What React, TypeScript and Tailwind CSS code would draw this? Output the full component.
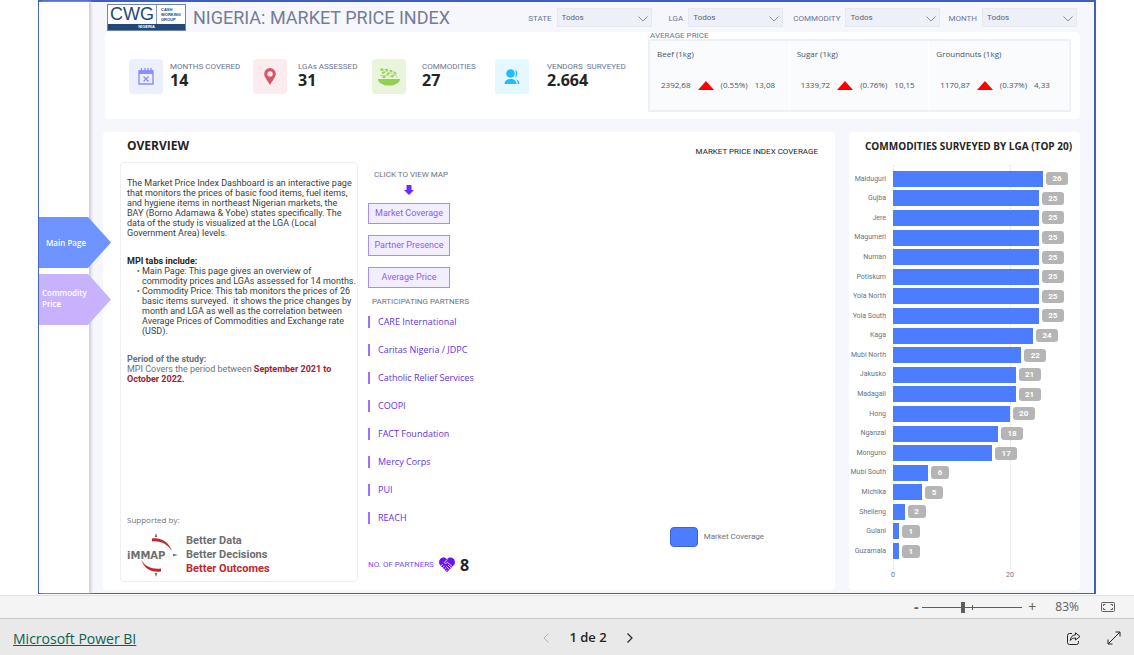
import { useState } from "react";

const DIN = "font-['Roboto','Liberation_Sans',sans-serif]";
const SEGOE = "font-['Open_Sans','Noto_Sans',sans-serif]";

const filters = [
  { id: "state", label: "STATE", space: "" },
  { id: "lga", label: "LGA", space: "ml-[17px]" },
  { id: "commodity", label: "COMMODITY", space: "ml-2.5" },
  { id: "month", label: "MONTH", space: "ml-2" },
];

const stats = [
  { label: "MONTHS COVERED", value: "14", tile: "bg-[#eaf0ff]", gap: "gap-[7px]", icon: <CalendarIcon /> },
  { label: "LGAs ASSESSED", value: "31", tile: "bg-[#fdecee]", gap: "gap-[11px]", icon: <PinIcon /> },
  { label: "COMMODITIES", value: "27", tile: "bg-[#e8f5dc]", gap: "gap-4", icon: <BowlIcon /> },
  { label: "VENDORS  SURVEYED", value: "2.664", tile: "bg-[#e6f8ff]", gap: "gap-[18px]", icon: <PeopleIcon /> },
];

const prices = [
  { name: "Beef (1kg)", value: "2392,68", change: "(0.55%)", diff: "13,08" },
  { name: "Sugar (1kg)", value: "1339,72", change: "(0.76%)", diff: "10,15" },
  { name: "Groundnuts (1kg)", value: "1170,87", change: "(0.37%)", diff: "4,33" },
];

const partners = [
  "CARE International",
  "Caritas Nigeria / JDPC",
  "Catholic Relief Services",
  "COOPI",
  "FACT Foundation",
  "Mercy Corps",
  "PUI",
  "REACH",
];

const lgas = [
  { name: "Maiduguri", count: 26 },
  { name: "Gujba", count: 25 },
  { name: "Jere", count: 25 },
  { name: "Magumeri", count: 25 },
  { name: "Numan", count: 25 },
  { name: "Potiskum", count: 25 },
  { name: "Yola North", count: 25 },
  { name: "Yola South", count: 25 },
  { name: "Kaga", count: 24 },
  { name: "Mubi North", count: 22 },
  { name: "Jakusko", count: 21 },
  { name: "Madagali", count: 21 },
  { name: "Hong", count: 20 },
  { name: "Nganzai", count: 18 },
  { name: "Monguno", count: 17 },
  { name: "Mubi South", count: 6 },
  { name: "Michika", count: 5 },
  { name: "Shelleng", count: 2 },
  { name: "Gulani", count: 1 },
  { name: "Guzamala", count: 1 },
];

// the x axis runs a little past the largest bar so its badge fits
const AXIS_MAX = 30;

function CalendarIcon() {
  return (
    <svg width="16" height="17" viewBox="0 0 16 17" fill="none">
      <path d="M1 3h14v13H1z" stroke="#8c8cff" strokeWidth="1.4" />
      <path d="M1 2.500h14v3.500H1z" fill="#8c8cff" />
      <path d="M3.500 0v4M7 0v3M10 0v3M13 0v4" stroke="#8c8cff" strokeWidth="1.3" />
      <path d="M5.500 8.500l5 5M10.500 8.500l-5 5" stroke="#8c8cff" strokeWidth="1.4" />
    </svg>
  );
}

function PinIcon() {
  return (
    <svg width="12" height="17" viewBox="0 0 12 17">
      <path
        fillRule="evenodd"
        fill="#d9536a"
        d="M6 0a5.8 5.8 0 0 0-5.8 5.8C.2 9.500 4 13 6 17c2-4 5.800-7.500 5.800-11.200A5.800 5.800 0 0 0 6 0zm0 3.200a2.700 2.700 0 1 1 0 5.400 2.700 2.700 0 0 1 0-5.400z"
      />
    </svg>
  );
}

function BowlIcon() {
  return (
    <svg width="22" height="18" viewBox="0 0 22 18">
      <path d="M0 11h22c0 3-2.500 4.500-5 5.500-1 .7-2 .9-3 .9H8c-1 0-2-.2-3-.9C2.500 15.500 0 14 0 11z" fill="#92d050" />
      <path d="M2 2.500c6 .5 13 2.500 18 7M2 7.500c4-.5 9 0 13 2" stroke="#92d050" strokeWidth="0.6" fill="none" />
      <g fill="#92d050">
        <ellipse cx="4" cy="1.500" rx="1.800" ry="0.900" />
        <ellipse cx="8.500" cy="1.800" rx="1.800" ry="1" transform="rotate(15 8.500 1.800)" />
        <ellipse cx="13" cy="3" rx="1.800" ry="1" transform="rotate(25 13 3)" />
        <ellipse cx="17" cy="5" rx="1.800" ry="1" transform="rotate(35 17 5)" />
        <ellipse cx="5.500" cy="4.700" rx="1.800" ry="0.900" transform="rotate(-15 5.500 4.700)" />
        <ellipse cx="10" cy="5.900" rx="1.800" ry="0.900" transform="rotate(-10 10 5.900)" />
        <ellipse cx="14.500" cy="7.900" rx="1.800" ry="0.900" />
        <ellipse cx="6" cy="9" rx="1.800" ry="0.900" />
      </g>
    </svg>
  );
}

function PeopleIcon() {
  return (
    <svg width="16" height="16" viewBox="0 0 16 16" fill="#1fbcff">
      <circle cx="6.500" cy="4.500" r="4.300" />
      <path d="M0.500 15c0-3 2.200-5 6-5s6 2 6 5z" />
      <path d="M11 .8a4 4 0 0 1 0 7.400c1.300-2 1.300-5.400 0-7.400zM12.300 10.200c2 .7 3.200 2.500 3.200 4.800h-1.800c0-2-.4-3.500-1.400-4.800z" />
    </svg>
  );
}

function HeartHandsIcon() {
  return (
    <svg width="16" height="16" viewBox="0 0 16 16">
      <path
        d="M8 2.300C6.200-.2 2.500.200 1 2.300c-1.400 2-1.200 4.500.5 6.300L8 15.200l6.500-6.600c1.700-1.800 1.900-4.300.5-6.300C13.500.200 9.800-.2 8 2.300z"
        fill="#6a11f5"
      />
      <path
        d="M8.300 2.300L5.200 5.500c.8 1.300 2.300 1 3.200-.2l5.400 4.800M9 8l3.300 3.300M7.200 9.300l3.400 3.400M1.800 9l2-2M3.300 11l2.200-2.200M5.200 12.600l1.800-1.800M7 14.200l1.300-1.300"
        stroke="#fff"
        strokeWidth="0.800"
        fill="none"
      />
    </svg>
  );
}

function CwgLogo() {
  return (
    <div className="flex w-[79px] shrink-0 flex-col border border-[#6f86a8] bg-white font-['Liberation_Sans',sans-serif] text-[#24477a]">
      <div className="flex h-[19px]">
        <span className="w-[49px] border-r border-[#8c9bb5] text-center text-[18px] leading-[18px]">CWG</span>
        <span className="flex-1 pt-0.5 pl-1 text-[4px] leading-[5px] font-bold">
          CASH
          <br />
          WORKING
          <br />
          GROUP
        </span>
      </div>
      <div className="h-[6px] bg-[#24477a] text-center text-[4px] leading-[6px] font-bold text-white">NIGERIA</div>
    </div>
  );
}

function ImmapLogo() {
  return (
    <div className="flex items-center gap-[7px]">
      <svg width="52" height="44" viewBox="0 0 52 44">
        <path d="M25 5.500C34 4 42 9 45 18C40 11 34 7.500 25 8.500z" fill="#c1272d" />
        <path d="M14.500 27C17 36 25 40 34 38.500V35.500C26 36.500 18 34 14.500 27z" fill="#c1272d" />
        <path d="M29 0l1.300 4h-2.600zM29 44l1.300-4h-2.600zM51 22l-5-1.300v2.600z" fill="#6d6e71" />
        <text x="0" y="25.500" fontSize="10" fontWeight="bold" fill="#6d6e71" fontFamily="DejaVu Sans, sans-serif">
          iMMAP
        </text>
      </svg>
      <p className="font-['Roboto',sans-serif] text-[11px] leading-[14px] font-bold text-[#6d6e71]">
        Better Data
        <br />
        Better Decisions
        <br />
        <span className="text-[#c1272d]">Better Outcomes</span>
      </p>
    </div>
  );
}

function Filter({ id, label, space }: { id: string; label: string; space: string }) {
  return (
    <div className={`flex items-center gap-[5px] ${space}`}>
      <label htmlFor={id} className="pt-0.5 text-[8px] text-[#6b7590]">
        {label}
      </label>
      <div className="relative">
        <select
          id={id}
          className="block h-[19px] w-[95px] appearance-none border border-[#e6e9f0] bg-[#edf0f8] px-1 text-[8px] text-[#5c6273]"
        >
          <option>Todos</option>
        </select>
        <svg className="pointer-events-none absolute top-2 right-1" width="10" height="6" viewBox="0 0 10 6" fill="none">
          <path d="M0.500 0.500L5 5l4.500-4.500" stroke="#8a8f9c" />
        </svg>
      </div>
    </div>
  );
}

function AveragePrice() {
  return (
    <section className={`w-[423px] ${SEGOE}`}>
      <h2 className={`pl-0.5 text-[8px] leading-[7px] text-[#6b7590] ${DIN}`}>AVERAGE PRICE</h2>
      <div className="grid h-[73px] grid-cols-3 border-2 border-[#edf0f6] bg-[#fafbfd] text-[8px] text-[#44546a]">
        {prices.map((p) => (
          <div key={p.name} className="border-r border-white pt-[5px] pl-[7px]">
            <h3 className="leading-4">{p.name}</h3>
            <div className="mt-[17px] flex items-center gap-[7px] pl-1 leading-3">
              <span>{p.value}</span>
              <svg width="16" height="9" viewBox="0 0 16 9">
                <path d="M8 0l8 9H0z" fill="#ff0000" />
              </svg>
              <span>{p.change}</span>
              <span>{p.diff}</span>
            </div>
          </div>
        ))}
      </div>
    </section>
  );
}

function Overview() {
  return (
    <div className="flex w-[238px] flex-1 flex-col rounded-sm border border-[#eeeff2] px-1.5 pt-[15px] pb-1 text-[9px] leading-[10px] whitespace-nowrap text-[#3c3c3c]">
      <p>
        The Market Price Index Dashboard is an interactive page
        <br />
        that monitors the prices of basic food items, fuel items,
        <br />
        and hygiene items in northeast Nigerian markets, the
        <br />
        BAY (Borno Adamawa &amp; Yobe) states specifically. The
        <br />
        data of the study is visualized at the LGA (Local
        <br />
        Government Area) levels.
      </p>
      <h3 className="mt-[18px] font-bold text-[#252423]">MPI tabs include:</h3>
      <ul className="list-['•_'] pl-[15px] marker:text-[#666]">
        <li>
          Main Page: This page gives an overview of
          <br />
          commodity prices and LGAs assessed for 14 months.
        </li>
        <li>
          Commodity Price: This tab monitors the prices of 26
          <br />
          basic items surveyed.&nbsp; it shows the price changes by
          <br />
          month and LGA as well as the correlation between
          <br />
          Average Prices of Commodities and Exchange rate
          <br />
          (USD).
        </li>
      </ul>
      <h3 className="mt-[18px] font-bold text-[#6b7280]">Period of the study:</h3>
      <p className="text-[#6b7280]">
        MPI Covers the period between <b className="text-[#9b2335]">September 2021 to</b>
        <br />
        <b className="text-[#9b2335]">October 2022.</b>
      </p>
      <div className="mt-auto">
        <p className={`mb-2 text-[8px] text-[#6b7280] ${SEGOE}`}>Supported by:</p>
        <ImmapLogo />
      </div>
    </div>
  );
}

function MapMenu() {
  const button = "h-[21px] w-[82px] border border-[#a98bff] bg-[#f3eefe] text-[9px] text-[#8b5cf6]";
  return (
    <div className="flex w-[110px] flex-col items-start">
      <p className="pl-1.5 text-[8px] leading-3 text-[#6b7280]">CLICK TO VIEW MAP</p>
      <svg className="mt-1 ml-9" width="10" height="10" viewBox="0 0 10 10">
        <path d="M2.500 0h5v5H10L5 10 0 5h2.500z" fill="#6a2cff" />
      </svg>
      <div className="mt-2 flex flex-col gap-[11px]">
        <button className={button}>Market Coverage</button>
        <button className={button}>Partner Presence</button>
        <button className={button}>Average Price</button>
      </div>
      <h3 className="mt-2 pl-1 text-[8px] leading-3 whitespace-nowrap text-[#6b7280]">PARTICIPATING PARTNERS</h3>
      <ul className={`mt-2 flex flex-col gap-4 text-[9px] leading-3 whitespace-nowrap text-[#6331e8] ${SEGOE}`}>
        {partners.map((name) => (
          <li key={name} className="border-l-2 border-[#9d70ff] pl-2">
            {name}
          </li>
        ))}
      </ul>
      <div className="mt-auto flex items-center gap-[5px] pb-[7px]">
        <span className="text-[8px] whitespace-nowrap text-[#7c4dff]">NO. OF PARTNERS</span>
        <HeartHandsIcon />
        <span className={`text-[16px] leading-5 font-bold text-[#252423] ${SEGOE}`}>8</span>
      </div>
    </div>
  );
}

function LgaChart() {
  return (
    <section className="flex w-[231px] flex-col rounded bg-white pt-1.5 pr-3 pb-[9px]">
      <h2 className={`pl-4 text-[10px] leading-4 font-bold whitespace-nowrap text-[#252423] ${SEGOE}`}>
        COMMODITIES SURVEYED BY LGA (TOP 20)
      </h2>
      <div className="mt-[11px] flex flex-1 text-[7px]">
        <ul className="flex w-[37px] flex-col pt-1 pb-2 text-right text-[#6b7280]">
          {lgas.map((l) => (
            <li key={l.name} className="flex flex-1 items-center justify-end whitespace-nowrap">
              {l.name}
            </li>
          ))}
        </ul>
        <div className="relative ml-[7px] flex flex-1 flex-col pt-1 pb-2">
          <div className="absolute inset-y-0 left-0 border-l border-dotted border-[#dcdcdc]" />
          <div className="absolute inset-y-0 left-2/3 border-l border-dotted border-[#dcdcdc]" />
          {lgas.map((l) => (
            <div key={l.name} className="relative flex flex-1 items-center gap-[3px]">
              <div className="h-4 bg-[#4c7dff]" style={{ width: `${(l.count / AXIS_MAX) * 100}%` }} />
              <span
                className={`rounded-[3px] bg-[#b5b5b5] text-center text-[8px] leading-[13px] font-bold text-white ${
                  l.count > 9 ? "w-[22px]" : "w-[18px]"
                }`}
              >
                {l.count}
              </span>
            </div>
          ))}
        </div>
      </div>
      <div className="ml-[42px] flex text-[7px] leading-3 text-[#6b7280]">
        <span className="w-[115px]">0</span>
        <span>20</span>
      </div>
    </section>
  );
}

function NavTabs() {
  const tab =
    "flex h-[51px] w-[72px] items-center text-left text-[8px] leading-[11px] font-semibold text-white [clip-path:polygon(0_0,49px_0,100%_50%,49px_100%,0_100%)]";
  return (
    <nav className={`z-10 flex w-[50px] shrink-0 flex-col gap-1.5 bg-white pt-[215px] shadow-[2px_0_3px_#c9cad2] ${SEGOE}`}>
      <button className={`${tab} bg-[#6f93ff] pl-[7px]`}>Main Page</button>
      <button className={`${tab} bg-[#c8b1fd] pb-[3px] pl-[3px]`}>
        Commodity
        <br />
        Price
      </button>
    </nav>
  );
}

function ZoomBar() {
  const [zoom, setZoom] = useState(40);
  return (
    <div className="flex h-6 items-center justify-end border-y border-t-[#e1e1e1] border-b-[#c8c8c8] bg-[#f4f4f4] pr-[19px] text-[#605e5c]">
      <button aria-label="Zoom out" className="w-3 text-[14px] leading-4 font-bold">
        -
      </button>
      <div className="relative flex items-center">
        <input
          type="range"
          aria-label="Zoom"
          value={zoom}
          onChange={(e) => setZoom(Number(e.target.value))}
          className="h-3 w-[100px] appearance-none bg-transparent [&::-webkit-slider-runnable-track]:h-px [&::-webkit-slider-runnable-track]:bg-[#605e5c] [&::-webkit-slider-thumb]:-mt-[5px] [&::-webkit-slider-thumb]:h-[11px] [&::-webkit-slider-thumb]:w-1 [&::-webkit-slider-thumb]:appearance-none [&::-webkit-slider-thumb]:bg-[#605e5c]"
        />
        <span className="pointer-events-none absolute left-1/2 h-[5px] w-px bg-[#605e5c]" />
      </div>
      <button aria-label="Zoom in" className="ml-1 w-3 text-[14px] leading-4">
        +
      </button>
      <span className="mr-[22px] ml-[17px] text-[12px]">83%</span>
      <button aria-label="Fit to page">
        <svg width="14" height="10" viewBox="0 0 14 10" fill="none" stroke="#605e5c">
          <rect x="0.500" y="0.500" width="13" height="9" rx="1" />
          <path d="M4.500 2.500h-2v1.500M2.500 6v1.500h2M9.500 2.500h2v1.500M11.500 6v1.500h-2" />
        </svg>
      </button>
    </div>
  );
}

function Footer() {
  return (
    <footer className="flex h-9 items-center bg-[#e9e9e9] px-[13px] pt-0.5">
      <div className="flex-1">
        <a href="#" className="text-[14px] text-[#0b6156] underline">
          Microsoft Power BI
        </a>
      </div>
      <div className="flex items-center gap-5 pl-[42px]">
        <button aria-label="Previous page">
          <svg width="6" height="10" viewBox="0 0 6 10" fill="none">
            <path d="M5.500 0.500L1 5l4.500 4.500" stroke="#b3b0ad" />
          </svg>
        </button>
        <span className="text-[13px] font-semibold text-[#252423]">1 de 2</span>
        <button aria-label="Next page">
          <svg width="6" height="10" viewBox="0 0 6 10" fill="none">
            <path d="M0.500 0.500L5 5L0.500 9.500" stroke="#252423" strokeWidth="1.200" />
          </svg>
        </button>
      </div>
      <div className="flex flex-1 items-center justify-end gap-[26px]">
        <button aria-label="Share">
          <svg width="14" height="13" viewBox="0 0 14 13" fill="none" stroke="#252423">
            <path d="M5 1.500H2.500a2 2 0 0 0-2 2v7a2 2 0 0 0 2 2h7a2 2 0 0 0 2-2V9" />
            <path d="M8.500 0.800L13 4.500 8.500 8V6C6 6 4.500 6.800 3.300 8.500 3.500 5.300 5.300 3 8.500 2.800z" strokeLinejoin="round" />
          </svg>
        </button>
        <button aria-label="Full screen">
          <svg width="14" height="14" viewBox="0 0 14 14" fill="none" stroke="#252423">
            <path d="M1 13L13 1M8.500 1H13v4.500M1 8.500V13h4.500" />
          </svg>
        </button>
      </div>
    </footer>
  );
}

export default function App() {
  return (
    <div className={`flex min-h-screen flex-col bg-white ${SEGOE}`}>
      <main
        className={`mx-[38px] mb-px flex flex-1 border border-t-2 border-r-2 border-[#3f5fbf] bg-[#f6f7fc] ${DIN}`}
      >
        <NavTabs />
        <div className="flex min-w-0 flex-1 flex-col pr-3.5 pb-[3px] pl-3.5">
          <header className="flex h-[30px] items-center pt-px pr-[3px] pl-1">
            <CwgLogo />
            <h1 className="ml-[7px] text-[18px] leading-5 whitespace-nowrap text-[#747d96]">NIGERIA: MARKET PRICE INDEX</h1>
            <div className="ml-auto flex">
              {filters.map((f) => (
                <Filter key={f.id} {...f} />
              ))}
            </div>
          </header>

          <div className="ml-0.5 flex h-[87px] justify-between rounded bg-white pr-[9px] pl-6">
            <div className="mt-[27px] grid grid-cols-[124px_119px_123px_auto]">
              {stats.map((s) => (
                <div key={s.label} className={`flex items-start ${s.gap}`}>
                  <div className={`flex h-[35px] w-[34px] shrink-0 items-center justify-center rounded ${s.tile}`}>
                    {s.icon}
                  </div>
                  <div>
                    <p className="pt-[3px] text-[8px] leading-[9px] whitespace-pre text-[#6b7590]">{s.label}</p>
                    <p className={`text-[16px] leading-[18px] font-bold text-[#252423] ${SEGOE}`}>{s.value}</p>
                  </div>
                </div>
              ))}
            </div>
            <AveragePrice />
          </div>

          <div className="mt-[13px] flex flex-1 gap-3.5">
            <section className="flex flex-1 rounded bg-white px-[17px] pt-1.5 pb-2">
              <div className="flex flex-col">
                <h2 className={`mb-2 pl-[7px] text-[12px] leading-4 font-bold text-[#252423] ${SEGOE}`}>OVERVIEW</h2>
                <Overview />
              </div>
              <div className="flex pt-[31px] pl-2.5">
                <MapMenu />
              </div>
              <div className="flex flex-1 flex-col justify-between pt-2 pb-[35px]">
                <h3 className="text-right text-[8px] leading-3 text-[#252423]">MARKET PRICE INDEX COVERAGE</h3>
                <div className="flex items-center justify-end gap-1.5 pr-[54px]">
                  <span className="h-5 w-7 rounded border border-[#3f62cc] bg-[#4c7dff]" />
                  <span className="text-[8px] text-[#6b7280]">Market Coverage</span>
                </div>
              </div>
            </section>
            <LgaChart />
          </div>
        </div>
      </main>
      <ZoomBar />
      <Footer />
    </div>
  );
}
